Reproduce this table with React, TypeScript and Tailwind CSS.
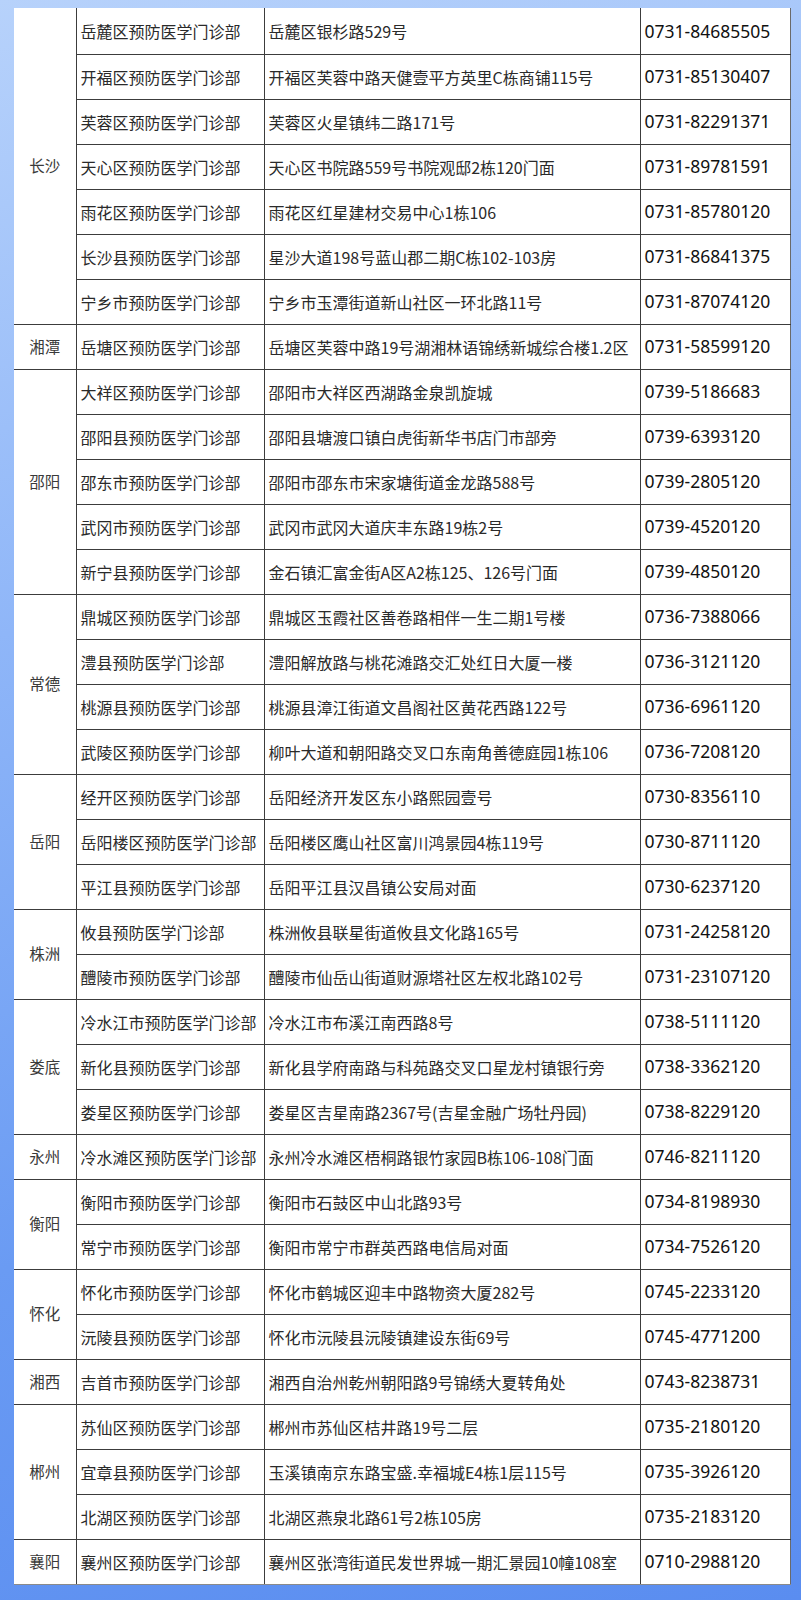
import React from 'react';

type Clinic = [string, string, string];

interface Group {
  city: string;
  rows: Clinic[];
}

const groups: Group[] = [
  {
    city: '长沙',
    rows: [
      ['岳麓区预防医学门诊部', '岳麓区银杉路529号', '0731-84685505'],
      ['开福区预防医学门诊部', '开福区芙蓉中路天健壹平方英里C栋商铺115号', '0731-85130407'],
      ['芙蓉区预防医学门诊部', '芙蓉区火星镇纬二路171号', '0731-82291371'],
      ['天心区预防医学门诊部', '天心区书院路559号书院观邸2栋120门面', '0731-89781591'],
      ['雨花区预防医学门诊部', '雨花区红星建材交易中心1栋106', '0731-85780120'],
      ['长沙县预防医学门诊部', '星沙大道198号蓝山郡二期C栋102-103房', '0731-86841375'],
      ['宁乡市预防医学门诊部', '宁乡市玉潭街道新山社区一环北路11号', '0731-87074120'],
    ],
  },
  {
    city: '湘潭',
    rows: [['岳塘区预防医学门诊部', '岳塘区芙蓉中路19号湖湘林语锦绣新城综合楼1.2区', '0731-58599120']],
  },
  {
    city: '邵阳',
    rows: [
      ['大祥区预防医学门诊部', '邵阳市大祥区西湖路金泉凯旋城', '0739-5186683'],
      ['邵阳县预防医学门诊部', '邵阳县塘渡口镇白虎街新华书店门市部旁', '0739-6393120'],
      ['邵东市预防医学门诊部', '邵阳市邵东市宋家塘街道金龙路588号', '0739-2805120'],
      ['武冈市预防医学门诊部', '武冈市武冈大道庆丰东路19栋2号', '0739-4520120'],
      ['新宁县预防医学门诊部', '金石镇汇富金街A区A2栋125、126号门面', '0739-4850120'],
    ],
  },
  {
    city: '常德',
    rows: [
      ['鼎城区预防医学门诊部', '鼎城区玉霞社区善卷路相伴一生二期1号楼', '0736-7388066'],
      ['澧县预防医学门诊部', '澧阳解放路与桃花滩路交汇处红日大厦一楼', '0736-3121120'],
      ['桃源县预防医学门诊部', '桃源县漳江街道文昌阁社区黄花西路122号', '0736-6961120'],
      ['武陵区预防医学门诊部', '柳叶大道和朝阳路交叉口东南角善德庭园1栋106', '0736-7208120'],
    ],
  },
  {
    city: '岳阳',
    rows: [
      ['经开区预防医学门诊部', '岳阳经济开发区东小路熙园壹号', '0730-8356110'],
      ['岳阳楼区预防医学门诊部', '岳阳楼区鹰山社区富川鸿景园4栋119号', '0730-8711120'],
      ['平江县预防医学门诊部', '岳阳平江县汉昌镇公安局对面', '0730-6237120'],
    ],
  },
  {
    city: '株洲',
    rows: [
      ['攸县预防医学门诊部', '株洲攸县联星街道攸县文化路165号', '0731-24258120'],
      ['醴陵市预防医学门诊部', '醴陵市仙岳山街道财源塔社区左权北路102号', '0731-23107120'],
    ],
  },
  {
    city: '娄底',
    rows: [
      ['冷水江市预防医学门诊部', '冷水江市布溪江南西路8号', '0738-5111120'],
      ['新化县预防医学门诊部', '新化县学府南路与科苑路交叉口星龙村镇银行旁', '0738-3362120'],
      ['娄星区预防医学门诊部', '娄星区吉星南路2367号(吉星金融广场牡丹园)', '0738-8229120'],
    ],
  },
  {
    city: '永州',
    rows: [['冷水滩区预防医学门诊部', '永州冷水滩区梧桐路银竹家园B栋106-108门面', '0746-8211120']],
  },
  {
    city: '衡阳',
    rows: [
      ['衡阳市预防医学门诊部', '衡阳市石鼓区中山北路93号', '0734-8198930'],
      ['常宁市预防医学门诊部', '衡阳市常宁市群英西路电信局对面', '0734-7526120'],
    ],
  },
  {
    city: '怀化',
    rows: [
      ['怀化市预防医学门诊部', '怀化市鹤城区迎丰中路物资大厦282号', '0745-2233120'],
      ['沅陵县预防医学门诊部', '怀化市沅陵县沅陵镇建设东街69号', '0745-4771200'],
    ],
  },
  {
    city: '湘西',
    rows: [['吉首市预防医学门诊部', '湘西自治州乾州朝阳路9号锦绣大夏转角处', '0743-8238731']],
  },
  {
    city: '郴州',
    rows: [
      ['苏仙区预防医学门诊部', '郴州市苏仙区桔井路19号二层', '0735-2180120'],
      ['宜章县预防医学门诊部', '玉溪镇南京东路宝盛.幸福城E4栋1层115号', '0735-3926120'],
      ['北湖区预防医学门诊部', '北湖区燕泉北路61号2栋105房', '0735-2183120'],
    ],
  },
  {
    city: '襄阳',
    rows: [['襄州区预防医学门诊部', '襄州区张湾街道民发世界城一期汇景园10幢108室', '0710-2988120']],
  },
];

const cjk = "font-['Noto_Sans_CJK_SC',sans-serif]";

export default function App() {
  return (
    <div className="w-[801px] h-[1600px] pt-[8px] pl-[14px] bg-[linear-gradient(165deg,#b7d2fb_0%,#8fb6f8_35%,#6a9bf3_70%,#5a8df0_100%)]">
      <table className={`w-[776px] table-fixed border-collapse bg-white text-[#2a2a2a] ${cjk}`}>
        <colgroup>
          <col className="w-[62px]" />
          <col className="w-[188px]" />
          <col className="w-[376px]" />
          <col className="w-[150px]" />
        </colgroup>
        <tbody>
          {groups.map((g, gi) =>
            g.rows.map((r, ri) => {
              const isLast = gi === groups.length - 1;
              const isFirst = gi === 0 && ri === 0;
              const rowBorder = isLast ? 'border-b border-[#8a8a8a]' : 'border-b border-[#3c3c3c]';
              return (
                <tr key={`${gi}-${ri}`} className={isFirst ? 'h-[46px]' : 'h-[45px]'}>
                  {ri === 0 && (
                    <td
                      rowSpan={g.rows.length}
                      className={`${rowBorder} border-r border-r-[#3c3c3c] text-center align-middle text-[15.5px] text-[#3a3a3a] p-0`}
                    >
                      {g.city}
                    </td>
                  )}
                  <td className={`${rowBorder} border-r border-r-[#3c3c3c] pl-[4px] p-0 text-[16px] whitespace-nowrap`}>
                    {r[0]}
                  </td>
                  <td className={`${rowBorder} border-r border-r-[#3c3c3c] pl-[4px] p-0 text-[16px] whitespace-nowrap`}>
                    {r[1]}
                  </td>
                  <td
                    className={`${rowBorder} border-r border-r-[#6a6a6a] pl-[4px] p-0 text-[17.5px] text-[#111] whitespace-nowrap font-['Noto_Sans',sans-serif]`}
                  >
                    {r[2]}
                  </td>
                </tr>
              );
            })
          )}
        </tbody>
      </table>
    </div>
  );
}
